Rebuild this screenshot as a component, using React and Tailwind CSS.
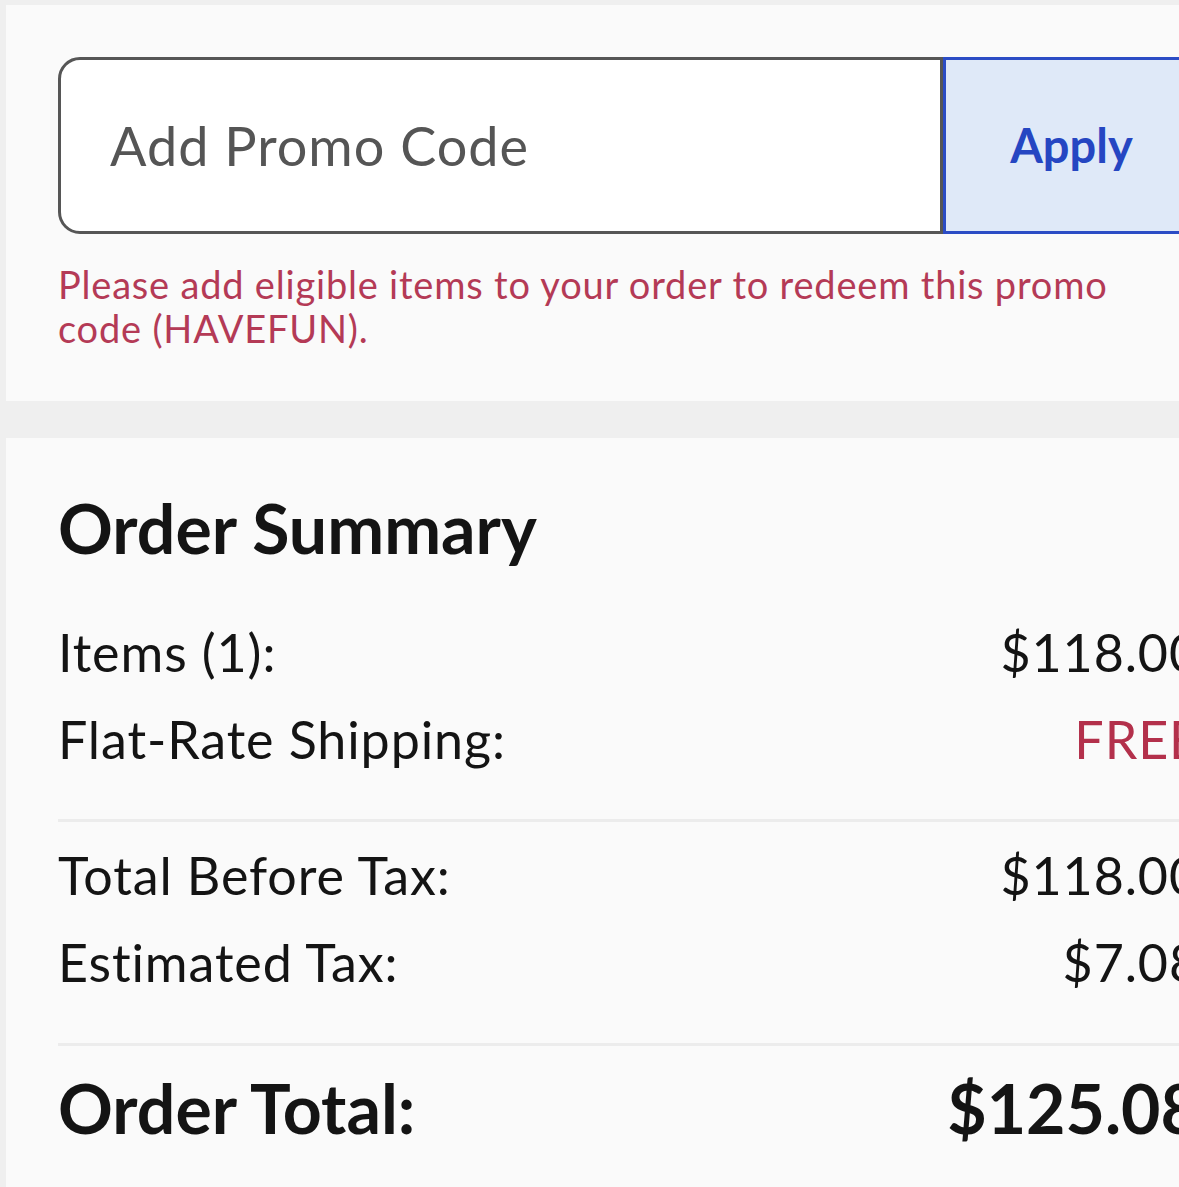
import React from "react";

const font = { fontFamily: "Lato, 'Liberation Sans', sans-serif" };

function Row({ label, value, valueClass = "text-[#141414]" }) {
  return (
    <div className="flex items-center justify-between h-[87px] text-[52px] leading-[87px] tracking-[0.9px] text-[#141414]">
      <span>{label}</span>
      <span className={valueClass}>{value}</span>
    </div>
  );
}

export default function App() {
  return (
    <div
      className="w-[1179px] h-[1187px] overflow-hidden bg-[#efefef] pt-[5px] pl-[6px]"
      style={font}
    >
      <div className="w-[1250px] flex flex-col">
        <div className="bg-[#fafafa] h-[396px] px-[52px] pt-[52px]">
          <div className="flex h-[177px]">
            <div className="w-[885px] bg-white border-[3px] border-[#565656] rounded-l-[22px] flex items-center pl-[49px] text-[54px] tracking-[1px] text-[#555555]">
              Add Promo Code
            </div>
            <div className="w-[257px] bg-[#dfe9f8] border-[3px] border-[#2b4cc5] rounded-r-[10px] flex items-center justify-center text-[47px] font-bold text-[#2546c2]">
              Apply
            </div>
          </div>
          <div className="mt-[28px] text-[38px] leading-[44px] tracking-[0.8px] text-[#b43a56]">
            Please add eligible items to your order to redeem this promo
            <br />
            code (HAVEFUN).
          </div>
        </div>
        <div className="mt-[37px] bg-[#fafafa] h-[800px] px-[52px] pt-[49px]">
          <div className="w-[1142px]">
            <div className="text-[68px] leading-[82px] font-bold text-[#141414]">
              Order Summary
            </div>
            <div className="mt-[40px]">
              <Row label="Items (1):" value="$118.00" />
              <Row label="Flat-Rate Shipping:" value="FREE" valueClass="text-[#b3304b]" />
            </div>
            <div className="mt-[36px] h-[3px] bg-[#ececec]" />
            <div className="mt-[10px]">
              <Row label="Total Before Tax:" value="$118.00" />
              <Row label="Estimated Tax:" value="$7.08" />
            </div>
            <div className="mt-[37px] h-[3px] bg-[#ececec]" />
            <div className="mt-[21px] flex items-center justify-between text-[68px] leading-[82px] font-bold text-[#141414]">
              <span>Order Total:</span>
              <span>$125.08</span>
            </div>
          </div>
        </div>
      </div>
    </div>
  );
}
